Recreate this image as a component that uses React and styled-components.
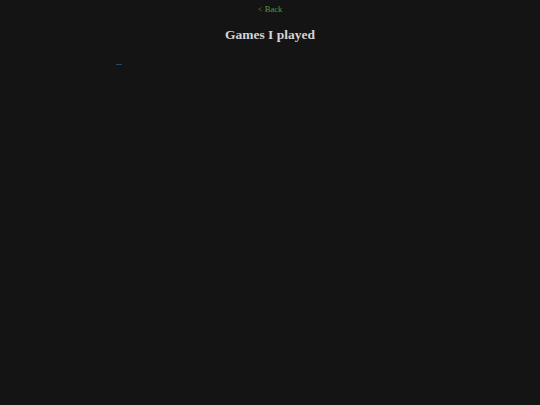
import styled, { createGlobalStyle } from "styled-components";

const GlobalStyle = createGlobalStyle`
  html, body {
    margin: 0;
    padding: 0;
    background: #141414;
    font-family: "Liberation Serif", "Times New Roman", serif;
  }
`;

const Page = styled.div`
  min-height: 405px;
  display: flex;
  flex-direction: column;
  align-items: center;
  padding-top: 4px;
  box-sizing: border-box;
`;

const BackLink = styled.a`
  color: #5c9a3a;
  font-size: 8.5px;
  line-height: 10px;
  text-decoration: none;
`;

const Title = styled.h1`
  color: #d4d4d4;
  font-size: 13.5px;
  font-weight: bold;
  margin: 13px 0 0;
  line-height: 16px;
`;

const List = styled.div`
  align-self: stretch;
  padding-left: 116px;
  margin-top: 16px;
  color: #b0b0b0;
  font-size: 7px;
  line-height: 8px;
  letter-spacing: 0.3px;
`;

export default function App() {
  return (
    <>
      <GlobalStyle />
      <Page>
        <BackLink href="#">&lt; Back</BackLink>
        <Title>Games I played</Title>
        <List>...</List>
      </Page>
    </>
  );
}
